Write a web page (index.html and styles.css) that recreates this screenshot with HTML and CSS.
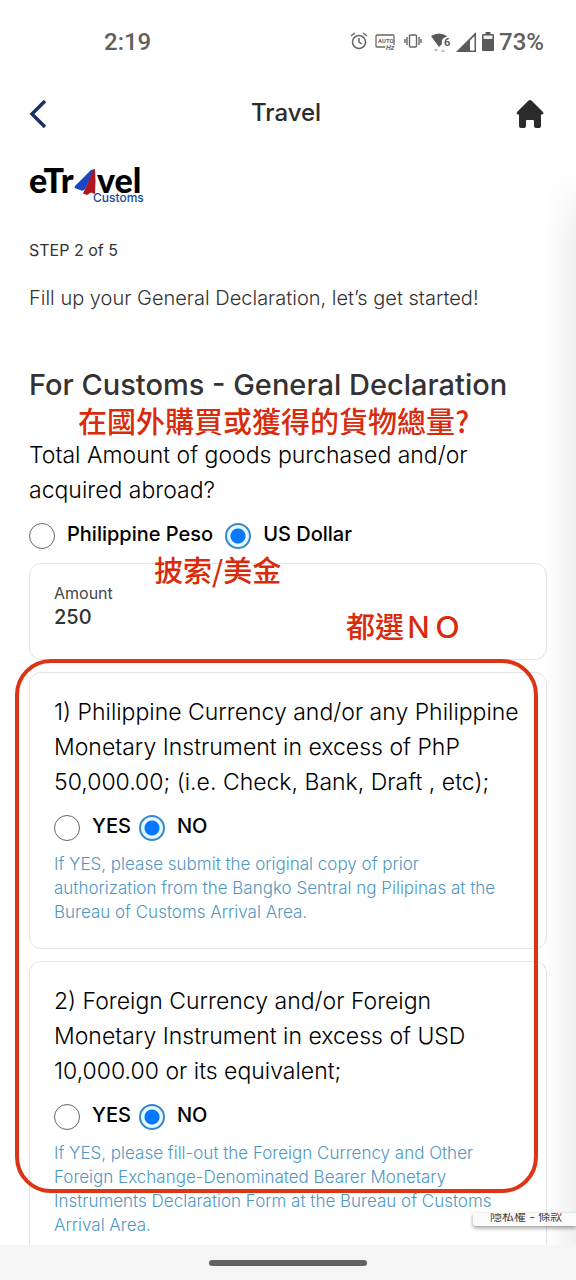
FILE: index.html
```html
<!DOCTYPE html>
<html lang="en">
<head>
<meta charset="utf-8">
<meta name="viewport" content="width=device-width, initial-scale=1">
<title>Travel</title>
<link rel="stylesheet" href="styles.css">
</head>
<body>
<div class="app">
  <div class="status">
    <span class="clock">2:19</span>
    <div class="indicators">
      <svg width="18" height="20" viewBox="0 0 18 20" fill="none" stroke="#666" stroke-width="1.5"><circle cx="9" cy="10" r="6.5"/><path d="M9 6v4l3 2M1 4l4-3M17 4l-4-3"/></svg>
      <svg class="hz" width="20" height="20" viewBox="0 0 20 20"><path d="M10 15H2q-1 0-1-1V4q0-1 1-1h16q1 0 1 1v9" fill="none" stroke="#666" stroke-width="1.3"/><text x="3" y="11" class="hz-auto">AUTO</text><text x="11" y="18" class="hz-unit">Hz</text></svg>
      <svg class="vib" width="18" height="20" viewBox="0 0 18 20" fill="none" stroke="#666" stroke-width="1.4"><rect x="5.500" y="3" width="7" height="12" rx="1"/><path d="M3 5v8M15 5v8M1 7v4M17 7v4"/></svg>
      <svg class="wifi" width="20" height="20" viewBox="0 0 20 20"><path d="M0 4Q8-1 16 4L15 5Q10 6 11 12L8 15Z" fill="#5a5a5a"/><text x="13" y="14" class="wifi-gen">6</text><path d="M3 17h4l-2 3zM10 20h4l-2-3z" fill="#bbb"/></svg>
      <svg class="signal" width="21" height="21" viewBox="0 0 21 21"><path d="M0 20 20 0v20z" fill="#5a5a5a"/><path d="M14 8.500v10h4.500V4z" fill="#fff"/></svg>
      <svg class="battery" width="12" height="20" viewBox="0 0 12 20"><path d="M3.500 0h5v2H11q1 0 1 1v15q0 1-1 1H1q-1 0-1-1V3q0-1 1-1h2.500z" fill="#5a5a5a"/><path d="M1.500 3.500h9V7h-9z" fill="#eee"/></svg>
      <span class="percent">73%</span>
    </div>
  </div>
  <header class="topbar">
    <button class="icon-btn" aria-label="Back"><svg width="20" height="30" viewBox="0 0 20 30"><path d="M17 2 4 15 17 28" fill="none" stroke="#1d3061" stroke-width="3.500"/></svg></button>
    <h1 class="title">Travel</h1>
    <button class="icon-btn" aria-label="Home"><svg width="28" height="30" viewBox="0 0 28 30"><path d="M12.500 1.500q1.500-1.200 3 0L27 13q1 2-1 2.500h-1V27q0 2-2 2h-3q-2 0-2-2v-5q0-1-1-1h-6q-1 0-1 1v5q0 2-2 2H5q-2 0-2-2V15.500H2q-2-.5-1-2.500z" fill="#2b2b2b"/></svg></button>
  </header>
  <main class="page">
    <svg class="logo" width="116" height="42" viewBox="0 0 116 42" role="img" aria-label="eTravel Customs">
      <text x="0" y="29" class="logo-word">eTr</text>
      <path d="M46 22 62 6 66 5 56 25Q54 28 51 26L47 24.500Q45 24 46 22Z" fill="#1749c6"/>
      <path d="M66 5Q67 17 66 30L62 28.500 58 31 54 29.500Q60 17 64 6Z" fill="#b01620"/>
      <text x="68" y="29" class="logo-word">vel</text>
      <text x="64" y="38" class="logo-sub">Customs</text>
    </svg>
    <p class="step">STEP 2 of 5</p>
    <p class="intro">Fill up your General Declaration, let’s get started!</p>
    <h2 class="heading">For Customs - General Declaration</h2>
    <p class="note" lang="zh-Hant">在國外購買或獲得的貨物總量?</p>
    <fieldset class="question">
      <legend class="prompt">Total Amount of goods purchased and/or acquired abroad?</legend>
      <div class="choices">
        <label class="choice"><input type="radio" name="currency">Philippine Peso</label>
        <label class="choice"><input type="radio" name="currency" checked>US Dollar</label>
      </div>
    </fieldset>
    <div class="card amount">
      <label class="amount-label" for="amount">Amount</label>
      <input class="amount-value" id="amount" type="text" inputmode="decimal" value="250">
      <span class="note note-currency" lang="zh-Hant">披索/美金</span>
      <span class="note note-no" lang="zh-Hant">都選ＮＯ</span>
    </div>
    <div class="group">
      <fieldset class="card item">
        <legend class="prompt">1) Philippine Currency and/or any Philippine Monetary Instrument in excess of PhP 50,000.00; (i.e. Check, Bank, Draft , etc);</legend>
        <div class="choices">
          <label class="choice"><input type="radio" name="q1">YES</label>
          <label class="choice"><input type="radio" name="q1" checked>NO</label>
        </div>
        <p class="hint">If YES, please submit the original copy of prior authorization from the Bangko Sentral ng Pilipinas at the Bureau of Customs Arrival Area.</p>
      </fieldset>
      <fieldset class="card item item-last">
        <legend class="prompt">2) Foreign Currency and/or Foreign Monetary Instrument in excess of USD 10,000.00 or its equivalent;</legend>
        <div class="choices">
          <label class="choice"><input type="radio" name="q2">YES</label>
          <label class="choice"><input type="radio" name="q2" checked>NO</label>
        </div>
        <p class="hint">If YES, please fill-out the Foreign Currency and Other Foreign Exchange-Denominated Bearer Monetary Instruments Declaration Form at the Bureau of Customs Arrival Area.</p>
      </fieldset>
      <div class="highlight"></div>
    </div>
    <div class="privacy" lang="zh-Hant"><span class="privacy-text">隱私權 - 條款</span></div>
  </main>
  <div class="gesture"><div class="handle"></div></div>
</div>
</body>
</html>
```
FILE: styles.css
```css
* { box-sizing: border-box; }
body {
  margin: 0;
  background: #fff;
  color: #000;
  font-family: Inter, "Noto Sans CJK TC", sans-serif;
}
h1, h2, p { margin: 0; }
.app { min-height: 100vh; display: flex; flex-direction: column; }
.status {
  display: flex;
  justify-content: space-between;
  align-items: center;
  height: 84px;
  padding: 0 32px 0 104px;
  color: #606060;
  font: 500 24px/28px Roboto, sans-serif;
}
.indicators { display: flex; align-items: center; gap: 7px; }
.vib, .wifi { margin-left: 2px; }
.signal, .battery, .percent { margin-left: -2px; }
.hz-auto { font: 700 6px Roboto, sans-serif; fill: #666; }
.hz-unit { font: italic 700 7px Roboto, sans-serif; fill: #666; }
.wifi-gen { font: 700 11px Roboto, sans-serif; fill: #5a5a5a; }
.topbar {
  display: grid;
  grid-template-columns: 60px 1fr 60px;
  align-items: center;
  height: 60px;
  padding: 0 32px 0 28px;
}
.icon-btn { border: 0; background: none; padding: 0; display: flex; }
.icon-btn:last-child { justify-content: flex-end; }
.title { text-align: center; font-size: 24px; line-height: 32px; font-weight: 500; color: #2b2b2b; padding-bottom: 2px; }
.page { position: relative; flex: 1; display: flex; flex-direction: column; padding: 20px 29px 0; }
.page::after {
  content: "";
  position: absolute;
  top: 20px;
  right: 0;
  bottom: 0;
  width: 32px;
  background: linear-gradient(to right, rgba(0, 0, 0, 0), rgba(0, 0, 0, 0.06));
  mask-image: linear-gradient(to bottom, transparent, #000 80px);
  pointer-events: none;
}
.logo { display: block; overflow: visible; }
.logo-word { font: 900 34px Lato, sans-serif; fill: #000; }
.logo-sub { font: 500 12px Inter, sans-serif; fill: #174b9a; }
.step { margin-top: 32px; font-size: 16px; line-height: 24px; color: #333; }
.intro { margin-top: 24px; font-size: 20px; line-height: 24px; color: #333; font-weight: 300; }
.heading { margin-top: 57px; font-size: 29px; line-height: 35px; font-weight: 500; color: #333; }
.note {
  color: #d92b0c;
  font: 500 29px/36px "Noto Sans CJK TC", sans-serif;
  white-space: nowrap;
}
p.note { margin-left: 49px; }
fieldset { border: 0; margin: 0; padding: 0; min-width: 0; }
legend { float: left; width: 100%; padding: 0; }
.prompt { font-size: 23px; line-height: 35px; font-weight: 300; }
.choices { clear: both; display: flex; gap: 12px; padding-top: 14px; }
.choice { display: flex; align-items: flex-start; gap: 12px; height: 28px; padding-top: 1px; font-size: 20px; line-height: 23px; font-weight: 500; }
.choice input {
  appearance: none;
  width: 26px;
  height: 26px;
  margin: 0;
  border: 1px solid #666;
  border-radius: 50%;
  background: #fff;
}
.choice input:checked {
  border: 2px solid #3d86c6;
  background: radial-gradient(circle, #0878ff 7px, #e3f8ff 8px);
}
.card { border: 1px solid #e3e3e3; border-radius: 12px; }
.amount { position: relative; display: flex; flex-direction: column; margin-top: 13px; padding: 17px 24px; min-height: 97px; }
.amount-label { font-size: 16px; line-height: 24px; color: #444; }
.amount-value { border: 0; padding: 0; width: 50%; background: none; font: 500 20px/24px Inter, sans-serif; color: #333; }
.note-currency { position: absolute; left: 124px; top: -13px; }
.note-no { position: absolute; right: 84px; top: 43px; }
.group { position: relative; display: flex; flex-direction: column; gap: 12px; flex: 1; margin-top: 12px; }
.item { padding: 22px 16px 24px 24px; }
.item .choices { gap: 8px; }
.item-last { flex: 1; padding-bottom: 8px; border-bottom: 0; border-radius: 12px 12px 0 0; }
.hint { margin-top: 10px; padding-right: 12px; font-size: 17px; line-height: 24px; font-weight: 300; color: #4f97c2; }
.highlight {
  position: absolute;
  top: -13px;
  left: -14px;
  right: 9px;
  bottom: 52px;
  border: 4px solid #dc3516;
  border-radius: 36px;
  pointer-events: none;
}
.privacy {
  position: absolute;
  z-index: 1;
  right: 0;
  bottom: 19px;
  width: 103px;
  height: 13px;
  padding-left: 17px;
  display: flex;
  align-items: flex-end;
  border-radius: 0 0 0 3px;
  background: #fafafa;
  box-shadow: 0 2px 4px rgba(0, 0, 0, 0.4);
  color: #444;
  font: 12px/14px Inter, "Noto Sans CJK TC", sans-serif;
}
.privacy-text { height: 13px; line-height: 8px; overflow: hidden; white-space: nowrap; }
.gesture { display: flex; align-items: center; justify-content: center; height: 35px; background: #f5f5f5; }
.handle { width: 158px; height: 6px; border-radius: 3px; background: #636363; }
```
